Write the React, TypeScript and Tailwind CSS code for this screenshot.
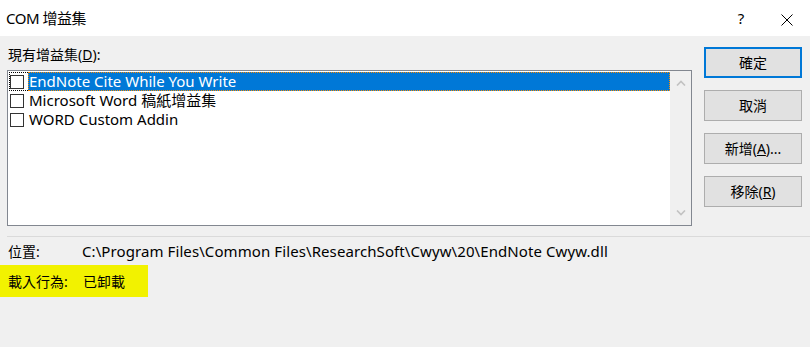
import React from "react";

const font = { fontFamily: '"Noto Sans", "Noto Sans CJK TC", sans-serif' };

function Check() {
  return <div className="w-[14px] h-[14px] border border-[#333333] bg-white shrink-0" />;
}

function Btn({ children, primary }: { children: React.ReactNode; primary?: boolean }) {
  return (
    <div
      className={
        "h-[31px] w-[98px] flex items-center justify-center bg-[#e1e1e1] text-[14px] text-[#000] " +
        (primary ? "border-2 border-[#0078d7]" : "border border-[#adadad]")
      }
    >
      {children}
    </div>
  );
}

export default function App() {
  return (
    <div className="w-[810px] h-[347px] bg-[#f0f0f0] overflow-hidden text-black" style={font}>
      <div className="h-[36px] bg-white flex items-center justify-between">
        <div className="pl-[6px] text-[15px] tracking-[-0.5px]">COM 增益集</div>
        <div className="flex items-center">
          <span className="w-[46px] text-center text-[15px]">?</span>
          <span className="w-[46px] text-center">
            <svg width="12" height="12" viewBox="0 0 12 12" className="inline-block">
              <path d="M0.5 0.5 L11.5 11.5 M11.5 0.5 L0.5 11.5" stroke="#000" strokeWidth="1" />
            </svg>
          </span>
        </div>
      </div>
      <div className="flex pl-[7px]">
        <div className="w-[685px]">
          <div className="h-[34px] pt-[9px] pl-[1px] text-[14px] leading-[20px]">
            現有增益集(<span className="underline">D</span>):
          </div>
          <div className="h-[156px] border border-[#828790] bg-white flex">
            <div className="flex-1 pt-[1px] pl-[1px] text-[15px] leading-[19px]">
              <div className="h-[19px] flex items-center border border-dotted border-[#000]">
                <div className="pr-[4px]"><Check /></div>
                <div className="flex-1 h-[19px] -my-[1px] -mr-[1px] bg-[#0078d7] text-white border border-dotted border-[#ff8c00] flex items-center">
                  EndNote Cite While You Write
                </div>
              </div>
              <div className="h-[19px] flex items-center pl-[1px]">
                <div className="pr-[5px]"><Check /></div>
                <span>Microsoft Word 稿紙增益集</span>
              </div>
              <div className="h-[19px] flex items-center pl-[1px]">
                <div className="pr-[5px]"><Check /></div>
                <span>WORD Custom Addin</span>
              </div>
            </div>
            <div className="w-[21px] bg-[#f0f0f0] flex flex-col items-center justify-between py-[9px]">
              <svg width="10" height="6" viewBox="0 0 10 6">
                <path d="M1 5.5 L5 1.5 L9 5.5" stroke="#c2c2c2" strokeWidth="1.6" fill="none" />
              </svg>
              <svg width="10" height="6" viewBox="0 0 10 6">
                <path d="M1 0.5 L5 4.5 L9 0.5" stroke="#c2c2c2" strokeWidth="1.6" fill="none" />
              </svg>
            </div>
          </div>
        </div>
        <div className="ml-[12px] pt-[11px] flex flex-col gap-[12px]">
          <Btn primary>確定</Btn>
          <Btn>取消</Btn>
          <Btn>新增(<span className="underline">A</span>)...</Btn>
          <Btn>移除(<span className="underline">R</span>)</Btn>
        </div>
      </div>
      <div className="ml-[7px] mt-[10px] h-px bg-[#dadada]" />
      <div className="flex items-center h-[28px] pl-[8px] text-[15px]">
        <span className="w-[74px] text-[14px]">位置:</span>
        <span className="tracking-[0.09px]">C:\Program Files\Common Files\ResearchSoft\Cwyw\20\EndNote Cwyw.dll</span>
      </div>
      <div className="w-[148px] h-[32px] bg-[#f2f200] flex items-center pl-[8px] text-[14px]">
        <span className="w-[75px]">載入行為:</span>
        <span>已卸載</span>
      </div>
    </div>
  );
}
